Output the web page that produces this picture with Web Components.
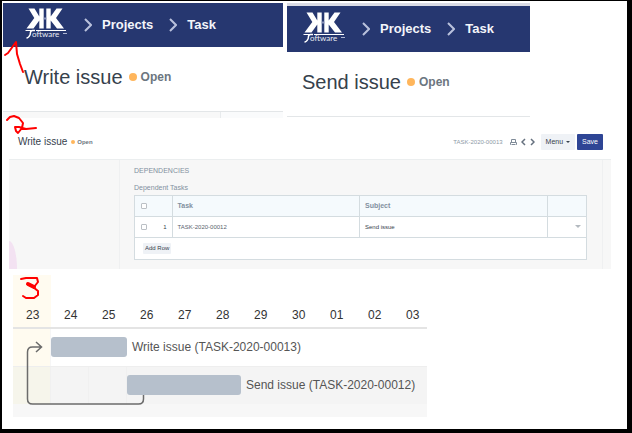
<!DOCTYPE html>
<html lang="en">
<head>
<meta charset="utf-8">
<title>Task dependencies</title>
<style>
  * { box-sizing: border-box; }
  body {
    margin: 0;
    min-height: 100vh;
    border: solid #000;
    border-width: 1px 5px 4px 2px;
    background: #fff;
    color: #36414c;
    font-family: "Liberation Sans", Arial, sans-serif;
  }
</style>
</head>
<body>
<issue-report></issue-report>
<script>
  function attach(element, html) {
    const template = document.createElement('template');
    template.innerHTML = `<style>* { box-sizing: border-box; }</style>${html}`;
    element.attachShadow({ mode: 'open' });
    element.shadowRoot.appendChild(template.content.cloneNode(true));
  }

  class KkLogo extends HTMLElement {
    constructor() {
      super();
      attach(this, `
      <style>
        :host { display: block; width: 42px; height: 32px; }
        svg { display: block; overflow: visible; }
      </style>
      <svg width="42" height="32" viewBox="0 0 42 32" fill="#fff" role="img" aria-label="KK Software">
        <path d="M14.300 -0.500H18.700V19.500H14.300V11.500L8.500 19.500H1.500L9.300 9L3.500 -0.500H9.500L14.300 7.500Z"/>
        <path d="M21.300 -0.500H25.700V7.500L31.500 -0.500H37.500L31 9L39 19.500H32L25.700 11.500V19.500H21.300Z"/>
        <path d="M18.700 8.500H21.300V10.500H18.700Z" fill="#8791b8"/>
        <path d="M0.500 21.500H8M11 21.500H41" stroke="#fff" stroke-width="1"/>
        <path d="M10 21.500H7.500C4.500 21.500 6 24 5 26C4 28 3.500 29 1.500 29" fill="none" stroke="#fff" stroke-width="1.500"/>
        <text x="7" y="28" font-family="Lato, sans-serif" font-size="8" fill="#e9ebf4">oftware</text>
        <path d="M38 24.500H42" stroke="#aeb6d3"/>
      </svg>
      `);
    }
  }

  class NavBar extends HTMLElement {
    constructor() {
      super();
      attach(this, `
      <style>
        :host { display: block; background: #263770; }
        nav { display: flex; align-items: center; height: var(--nav-height, 44px); padding-left: var(--nav-pad, 22px); }
        kk-logo { margin-right: 17px; }
        a { margin: 0 16px 0 10px; color: #f3f5fa; font-size: 13px; font-weight: bold; line-height: 16px; text-decoration: none; }
        .chevron { flex: none; }
      </style>
      <nav>
        <kk-logo></kk-logo>
        <svg class="chevron" width="8" height="14" fill="none" stroke="#b9c1dc" stroke-width="2"><path d="M1 1L7 7L1 13"/></svg>
        <a href="#projects">Projects</a>
        <svg class="chevron" width="8" height="14" fill="none" stroke="#b9c1dc" stroke-width="2"><path d="M1 1L7 7L1 13"/></svg>
        <a href="#task">Task</a>
      </nav>
      `);
    }
  }

  class PageTitle extends HTMLElement {
    constructor() {
      super();
      attach(this, `
      <style>
        :host { display: flex; align-items: center; gap: 4px; }
        :host([small]) { gap: 2px; }
        h1 { margin: 0 2px 0 0; font-size: 20px; font-weight: normal; line-height: 24px; }
        i { width: 8px; height: 8px; border-radius: 50%; background: #ffb65c; }
        span { color: #6c7680; font-size: 12px; font-weight: bold; line-height: 16px; }
        :host([small]) h1 { font-size: 10px; line-height: 12px; }
        :host([small]) i { width: 4px; height: 4px; }
        :host([small]) span { font-size: 6px; line-height: 8px; }
      </style>
      <h1><slot></slot></h1><i></i><span>Open</span>
      `);
    }
  }

  class TaskHeading extends HTMLElement {
    constructor() {
      super();
      attach(this, `
      <style>
        :host { display: flex; flex-direction: column; }
        page-title { padding: 18px 0 22px calc(var(--nav-pad, 22px) - 1px); border-bottom: 1px solid #e3e6e8; }
        .below { flex: 1; display: grid; grid-template-columns: 217fr 63fr; background: #f8f8f8; }
        .below div { border-left: 1px solid #e8ebed; grid-column: 2; background: #fafbfc; }
        :host([plain]) .below { visibility: hidden; }
      </style>
      <nav-bar></nav-bar>
      <page-title><slot></slot></page-title>
      <div class="below"><div></div></div>
      `);
    }
  }

  class FormToolbar extends HTMLElement {
    constructor() {
      super();
      attach(this, `
      <style>
        :host { display: flex; align-items: center; padding: 16px 8px 9px 9px; border-bottom: 1px solid #ebeeef; }
        .name { margin-left: auto; color: #8d99a6; font-size: 6px; line-height: 8px; }
        svg { flex: none; }
        .print { margin: 0 4px 0 7px; }
        .next { margin: 0 6px 0 4px; }
        button { height: 16px; padding: 0 5px; border: 0; border-radius: 1px; background: #eff2f6; color: #36414c; font: 7px/16px "Liberation Sans", Arial, sans-serif; }
        .primary { margin-left: 2px; background: #2e4595; color: #fff; }
        .caret { margin-left: 1px; vertical-align: 1px; }
      </style>
      <page-title small>Write issue</page-title>
      <span class="name">TASK-2020-00013</span>
      <svg class="print" width="7" height="8" fill="none" stroke="#7f8b98"><path d="M1.500 4V1.500H5.500V4M1 6.500H.5V4.500H6.500V6.500H6M1.500 6.500H5.500"/></svg>
      <svg width="5" height="8" fill="none" stroke="#66717f" stroke-width="1.500"><path d="M4 1L1 4L4 7"/></svg>
      <svg class="next" width="5" height="8" fill="none" stroke="#66717f" stroke-width="1.500"><path d="M1 1L4 4L1 7"/></svg>
      <button type="button">Menu <svg class="caret" width="4" height="2" fill="#36414c"><path d="M0 0H4L2 2Z"/></svg></button>
      <button type="button" class="primary">Save</button>
      `);
    }
  }

  class DependencyTable extends HTMLElement {
    constructor() {
      super();
      attach(this, `
      <style>
        :host { display: block; border: 1px solid #d4dce0; background: #fff; }
        table { width: 100%; border-collapse: collapse; table-layout: fixed; font-size: 6px; line-height: 8px; }
        th, td { height: 21px; padding: 0 5px; border-bottom: 1px solid #d4dce0; border-left: 1px solid #d4dce0; text-align: left; }
        tr > :first-child { border-left: 0; }
        th { height: 20px; background: #f5fafd; color: #8290a0; font-size: 7px; }
        td { color: #36414c; }
        .name { color: #59636e; }
        .pick { width: 37px; }
        .open { width: 39px; }
        .row { display: flex; align-items: center; justify-content: space-between; padding-left: 1px; }
        input { appearance: none; display: block; width: 6px; height: 6px; margin: 0; border: 1px solid #bbc0c5; border-radius: 1px; background: #fff; }
        td.open svg { display: block; margin-left: auto; }
        .foot { padding: 5px 8px; }
        button { display: block; height: 11px; padding: 0 2px; border: 0; border-radius: 1px; background: #eff2f6; color: #36414c; font: 6px/11px "Liberation Sans", Arial, sans-serif; }
      </style>
      <table>
        <thead>
          <tr>
            <th class="pick"><div class="row"><input type="checkbox" aria-label="Select all rows"></div></th>
            <th>Task</th><th>Subject</th><th class="open"></th>
          </tr>
        </thead>
        <tbody>
          <tr>
            <td><div class="row"><input type="checkbox" aria-label="Select row 1">1</div></td>
            <td class="name">TASK-2020-00012</td><td>Send issue</td>
            <td class="open"><svg width="6" height="3" fill="#b3b9bf"><path d="M0 0H6L3 3Z"/></svg></td>
          </tr>
        </tbody>
      </table>
      <div class="foot"><button type="button">Add Row</button></div>
      `);
    }
  }

  class TaskForm extends HTMLElement {
    constructor() {
      super();
      attach(this, `
      <style>
        :host { display: block; }
        .body { display: grid; grid-template-columns: 110px 1fr 8px; background: #f7f7f7; }
        .side { display: flex; align-items: flex-end; }
        .side::after { content: ""; width: 8px; height: 28px; border-radius: 0 8px 0 0 / 0 28px 0 0; background: #f3e2f2; }
        .main { padding: 7px 15px 9px 14px; border: solid #eff0f1; border-width: 0 1px; color: #8290a0; font-size: 7px; line-height: 8px; }
        h2 { margin: 0 0 9px; font: inherit; }
        h3 { margin: 0 0 3px; font: inherit; }
      </style>
      <form-toolbar></form-toolbar>
      <div class="body">
        <div class="side"></div>
        <div class="main">
          <h2>DEPENDENCIES</h2>
          <h3>Dependent Tasks</h3>
          <dependency-table></dependency-table>
        </div>
      </div>
      `);
    }
  }

  class GanttChart extends HTMLElement {
    constructor() {
      super();
      const days = ['23', '24', '25', '26', '27', '28', '29', '30', '01', '02', '03'];
      attach(this, `
      <style>
        :host { display: block; position: relative; max-width: 414px; overflow: hidden; color: #555; font-size: 12px; line-height: 16px; }
        .days, .row { display: grid; grid-template-columns: repeat(11, 38px); }
        .days { color: #333; border-bottom: 2px solid #e4e4e4; }
        .days span { padding: 32px 0 4px 13px; }
        .days span:first-child, .row > i:first-child { background: #fffbf0; }
        .row > i { grid-row: 1; border-right: 1px solid #f6f6f6; }
        .row { height: 37px; }
        .row + .row { height: 38px; background: #f4f4f4; border-top: 1px solid #eee; }
        .row + .row > i { border-color: #f0f0f0; }
        .row + .row > i:first-child { background: #f6f5eb; }
        .task { grid-row: 1; grid-column: var(--start) / -1; display: flex; align-items: center; gap: 5px; padding-bottom: 1px; z-index: 1; }
        .bar { width: calc(var(--length) * 38px); height: 20px; border-radius: 3px; background: #b6c0cc; }
        .rest { height: 13px; background: #f7f7f7; }
        .arrow { position: absolute; left: 0; top: 54px; }
      </style>
      <div class="days">${days.map(day => `<span>${day}</span>`).join('')}</div>
      <div class="row">
        ${days.map(() => '<i></i>').join('')}
        <div class="task" style="--start: 2; --length: 2"><div class="bar"></div>Write issue (TASK-2020-00013)</div>
      </div>
      <div class="row">
        ${days.map(() => '<i></i>').join('')}
        <div class="task" style="--start: 4; --length: 3"><div class="bar"></div>Send issue (TASK-2020-00012)</div>
      </div>
      <div class="rest"></div>
      <svg class="arrow" width="140" height="80" fill="none" stroke="#6b6b6b" stroke-width="1.500">
        <path d="M130.500 66V70Q130.500 75 125.500 75H19.500Q14.500 75 14.500 70V23Q14.500 18 19.500 18H28M23 13L28.500 18L23 23"/>
      </svg>
      `);
    }
  }

  // Hand-drawn step markers, laid over the sheet
  class StepMarks extends HTMLElement {
    constructor() {
      super();
      attach(this, `
      <style>
        :host { position: absolute; left: 0; top: 0; z-index: 2; pointer-events: none; }
        svg { display: block; }
      </style>
      <svg width="50" height="305" fill="none" stroke="#f00" stroke-width="2" stroke-linecap="round" stroke-linejoin="round" aria-hidden="true">
        <path d="M5 55L8 53L16 42L17 54L20 64L23 72"/>
        <path d="M7 120L10 117L14 116L19 118L23 123L22 128L18 133L16 131L15 127L19 127L26 129L36 128"/>
        <path d="M21 279L26 278L37 278L38 282L34 287L28 284L33 287L38 291L38 295L34 298L26 298L23 296"/>
        <path d="M28 284L34 287" stroke-width="4"/>
      </svg>
      `);
    }
  }

  class IssueReport extends HTMLElement {
    constructor() {
      super();
      attach(this, `
      <style>
        :host { display: block; }
        .headings { display: grid; grid-template-columns: 280fr 243fr 97fr; column-gap: 4px; height: 117px; margin: 0 -4px 0 1px; padding-top: 2px; }
        .second { --nav-pad: 16px; --nav-height: 46px; border-top: 3px solid #d9dbe5; }
        task-form { margin: 0 16px 6px 7px; }
        gantt-chart { margin: 0 16px 12px 11px; }
      </style>
      <div class="headings">
        <task-heading>Write issue</task-heading>
        <task-heading class="second" plain>Send issue</task-heading>
      </div>
      <task-form></task-form>
      <gantt-chart></gantt-chart>
      <step-marks></step-marks>
      `);
    }
  }

  customElements.define('kk-logo', KkLogo);
  customElements.define('nav-bar', NavBar);
  customElements.define('page-title', PageTitle);
  customElements.define('task-heading', TaskHeading);
  customElements.define('form-toolbar', FormToolbar);
  customElements.define('dependency-table', DependencyTable);
  customElements.define('task-form', TaskForm);
  customElements.define('gantt-chart', GanttChart);
  customElements.define('step-marks', StepMarks);
  customElements.define('issue-report', IssueReport);
</script>
</body>
</html>
